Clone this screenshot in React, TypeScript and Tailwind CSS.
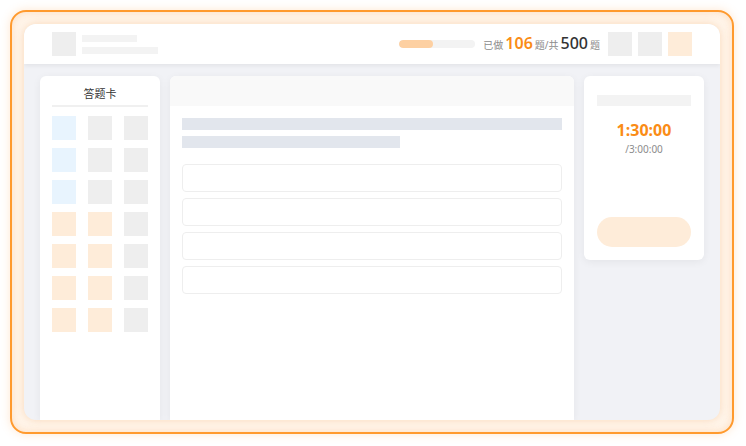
import React from 'react';

// ─── Exam skeleton preview ─────────────────────────────────────────────────────

const font = "font-['Noto_Sans','Noto_Sans_CJK_SC',sans-serif]";

type Cell = 'done' | 'todo' | 'mark';

const rows: Cell[][] = [
  ['done', 'todo', 'todo'],
  ['done', 'todo', 'todo'],
  ['done', 'todo', 'todo'],
  ['mark', 'mark', 'todo'],
  ['mark', 'mark', 'todo'],
  ['mark', 'mark', 'todo'],
  ['mark', 'mark', 'todo'],
];

const cellColor: Record<Cell, string> = {
  done: 'bg-[#e8f4fe]',
  todo: 'bg-[#eeeeee]',
  mark: 'bg-[#feecd9]',
};

const Header: React.FC = () => (
  <div className="relative z-10 flex h-[40px] shrink-0 items-center bg-white pl-[28px] pr-[28px] shadow-[0_2px_4px_rgba(0,0,0,0.06)]">
    <div className="h-[24px] w-[24px] bg-[#eeeeee]" />
    <div className="ml-[6px] flex flex-col gap-[5px]">
      <div className="h-[7px] w-[55px] bg-[#f3f3f3]" />
      <div className="h-[7px] w-[76px] bg-[#f3f3f3]" />
    </div>

    <div className="ml-auto flex items-center">
      <div className="h-[8px] w-[76px] overflow-hidden rounded-full bg-[#f3f3f3]">
        <div className="h-full w-[34px] rounded-full bg-[#fdd0a2]" />
      </div>
      <div className={`ml-[8px] flex items-baseline ${font}`}>
        <span className="text-[10px] text-[#8c8c8c]">已做</span>
        <span className="mx-[2px] text-[16px] font-semibold leading-none text-[#fa8c16]">106</span>
        <span className="text-[10px] text-[#8c8c8c]">题/共</span>
        <span className="mx-[2px] text-[16px] font-medium leading-none text-[#333333]">500</span>
        <span className="text-[10px] text-[#8c8c8c]">题</span>
      </div>
      <div className="ml-[8px] flex gap-[6px]">
        <div className="h-[24px] w-[24px] bg-[#eeeeee]" />
        <div className="h-[24px] w-[24px] bg-[#eeeeee]" />
        <div className="h-[24px] w-[24px] bg-[#feecd9]" />
      </div>
    </div>
  </div>
);

const AnswerCard: React.FC = () => (
  <div className="flex w-[120px] shrink-0 flex-col rounded-t-[6px] bg-white px-[12px] pt-[10px] shadow-[0_2px_8px_rgba(0,0,0,0.06)]">
    <div className={`text-center text-[11px] leading-[16px] text-[#333333] ${font}`}>答题卡</div>
    <div className="mt-[3px] h-[2px] bg-[#f0f0f0]" />
    <div className="mt-[9px] grid grid-cols-[24px_24px_24px] gap-x-[12px] gap-y-[8px]">
      {rows.flat().map((c, i) => (
        <div key={i} className={`h-[24px] w-[24px] ${cellColor[c]}`} />
      ))}
    </div>
  </div>
);

const Question: React.FC = () => (
  <div className="flex w-[404px] shrink-0 flex-col overflow-hidden rounded-t-[6px] bg-white shadow-[0_2px_8px_rgba(0,0,0,0.06)]">
    <div className="h-[30px] bg-[#f9f9f9]" />
    <div className="flex flex-col px-[12px] pt-[12px]">
      <div className="h-[12px] bg-[#e2e6ed]" />
      <div className="mt-[6px] h-[12px] w-[218px] bg-[#e2e6ed]" />
      <div className="mt-[16px] flex flex-col gap-[6px]">
        {[0, 1, 2, 3].map((i) => (
          <div key={i} className="h-[28px] rounded-[4px] border border-[#eeeeee]" />
        ))}
      </div>
    </div>
  </div>
);

const Timer: React.FC = () => (
  <div className="flex h-[184px] w-[120px] shrink-0 flex-col items-center rounded-[6px] bg-white px-[13px] pb-[13px] pt-[19px] shadow-[0_2px_8px_rgba(0,0,0,0.06)]">
    <div className="h-[11px] w-full bg-[#f3f3f3]" />
    <div className={`mt-[14px] text-[16px] font-bold leading-[20px] text-[#fa8c16] ${font}`}>1:30:00</div>
    <div className={`mt-[2px] text-[10px] leading-[14px] text-[#8c8c8c] ${font}`}>/3:00:00</div>
    <div className="mt-auto h-[30px] w-full rounded-full bg-[#feecd9]" />
  </div>
);

export default function App() {
  return (
    <div className="h-[446px] w-[746px] bg-white pl-[10px] pt-[10px]">
      <div className="h-[424px] w-[724px] rounded-[16px] border-2 border-[#ff9a2e] bg-[#fff6ec] p-[12px] shadow-[0_0_10px_rgba(255,160,70,0.25),inset_0_0_10px_rgba(253,205,160,0.6)]">
        <div className="flex h-full flex-col overflow-hidden rounded-[12px] bg-[#f1f2f6] shadow-[0_0_8px_rgba(245,180,120,0.45)]">
          <Header />
          <div className="flex min-h-0 flex-1 items-start gap-[10px] px-[16px] pt-[12px]">
            <div className="flex h-full gap-[10px]">
              <AnswerCard />
              <Question />
            </div>
            <Timer />
          </div>
        </div>
      </div>
    </div>
  );
}
